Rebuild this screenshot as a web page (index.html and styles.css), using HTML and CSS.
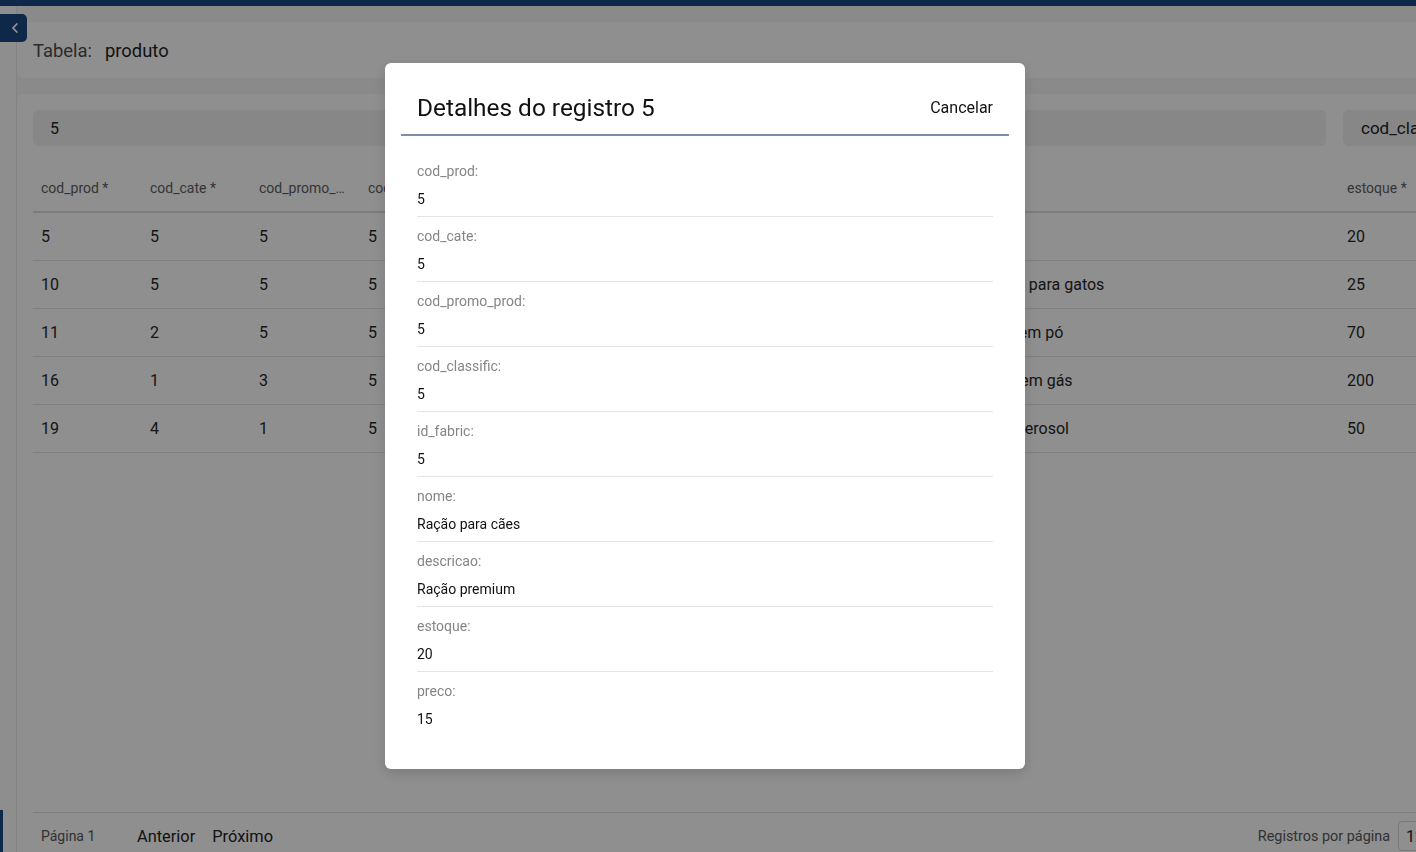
FILE: index.html
```html
<!DOCTYPE html>
<html lang="pt-BR">
<head>
<meta charset="utf-8">
<title>Tabela produto</title>
<link rel="stylesheet" href="styles.css">
</head>
<body>
<div class="topbar"></div>
<div class="layout">
  <aside class="sidebar">
    <div class="side-active"></div>
  </aside>
  <main class="main">
    <section class="card head-card">
      <span class="head-label">Tabela:</span>
      <span class="head-name">produto</span>
    </section>
    <section class="card data-card">
      <div class="filters">
        <div class="input search">5</div>
        <div class="input column">cod_classific</div>
      </div>
      <div class="table-wrap">
        <table class="grid">
          <colgroup>
            <col class="c-s"><col class="c-s"><col class="c-s"><col class="c-s"><col class="c-s">
            <col class="c-desc"><col class="c-nome"><col class="c-s"><col class="c-s">
          </colgroup>
          <thead>
            <tr>
              <th><span class="th-txt">cod_prod *</span></th>
              <th><span class="th-txt">cod_cate *</span></th>
              <th><span class="th-txt">cod_promo_prod *</span></th>
              <th><span class="th-txt">cod_classific *</span></th>
              <th><span class="th-txt">id_fabric *</span></th>
              <th><span class="th-txt">descricao</span></th>
              <th><span class="th-txt">nome</span></th>
              <th><span class="th-txt">estoque *</span></th>
              <th><span class="th-txt">preco *</span></th>
            </tr>
          </thead>
          <tbody>
            <tr><td>5</td><td>5</td><td>5</td><td>5</td><td>5</td><td>Ração premium</td><td>Cães</td><td>20</td><td>15</td></tr>
            <tr><td>10</td><td>5</td><td>5</td><td>5</td><td>3</td><td>Ração premium</td><td>Ração para gatos</td><td>25</td><td>18</td></tr>
            <tr><td>11</td><td>2</td><td>5</td><td>5</td><td>2</td><td>Leite integral</td><td>Leite em pó</td><td>70</td><td>9</td></tr>
            <tr><td>16</td><td>1</td><td>3</td><td>5</td><td>1</td><td>Bebida</td><td>Chá sem gás</td><td>200</td><td>3</td></tr>
            <tr><td>19</td><td>4</td><td>1</td><td>5</td><td>4</td><td>Limpeza</td><td>Cola aerosol</td><td>50</td><td>22</td></tr>
          </tbody>
        </table>
      </div>
      <footer class="pager">
        <span class="page-num">Página 1</span>
        <button class="pg-btn">Anterior</button>
        <button class="pg-btn">Próximo</button>
        <span class="spacer"></span>
        <span class="per-page">Registros por página</span>
        <span class="select">12</span>
      </footer>
    </section>
  </main>
</div>

<button class="back-btn" aria-label="Voltar">
  <svg width="10" height="12" viewBox="0 0 10 12"><path d="M6.8 2 L3 6 L6.8 10" fill="none" stroke="#fff" stroke-width="1.8" stroke-linecap="round" stroke-linejoin="round"/></svg>
</button>

<div class="overlay">
  <div class="modal">
    <div class="modal-head">
      <h2 class="modal-title">Detalhes do registro 5</h2>
      <button class="cancel">Cancelar</button>
    </div>
    <div class="modal-body">
      <div class="field"><div class="f-label">cod_prod:</div><div class="f-value">5</div></div>
      <div class="field"><div class="f-label">cod_cate:</div><div class="f-value">5</div></div>
      <div class="field"><div class="f-label">cod_promo_prod:</div><div class="f-value">5</div></div>
      <div class="field"><div class="f-label">cod_classific:</div><div class="f-value">5</div></div>
      <div class="field"><div class="f-label">id_fabric:</div><div class="f-value">5</div></div>
      <div class="field"><div class="f-label">nome:</div><div class="f-value">Ração para cães</div></div>
      <div class="field"><div class="f-label">descricao:</div><div class="f-value">Ração premium</div></div>
      <div class="field"><div class="f-label">estoque:</div><div class="f-value">20</div></div>
      <div class="field"><div class="f-label">preco:</div><div class="f-value">15</div></div>
    </div>
  </div>
</div>
</body>
</html>
```

FILE: styles.css
```css
* { box-sizing: border-box; }

html, body {
  margin: 0;
  height: 852px;
  overflow: hidden;
}

body {
  font-family: Roboto, "Noto Sans", "Liberation Sans", sans-serif;
  background: #eeeeee;
  color: #222;
}

.topbar {
  height: 6px;
  background: #17467c;
}

.layout {
  display: flex;
  height: 846px;
}

.sidebar {
  width: 17px;
  flex: none;
  background: #f4f4f4;
  border-right: 1px solid #e2e2e2;
  display: flex;
  flex-direction: column;
}

.side-active {
  margin-top: auto;
  width: 3px;
  height: 42px;
  background: #17467c;
}

.main {
  flex: none;
  width: 1484px;
  padding-top: 16px;
  display: flex;
  flex-direction: column;
  gap: 16px;
}

.card {
  flex: none;
  background: #f6f6f6;
  border-radius: 6px;
}

.head-card {
  height: 56px;
  display: flex;
  align-items: center;
  padding-left: 16px;
  gap: 13px;
  font-size: 18.4px;
}

.head-label { color: #4a4a4a; }
.head-name { color: #1e1e1e; }

.data-card {
  padding: 16px 16px 0;
  display: flex;
  flex-direction: column;
  height: 800px;
}

.filters {
  display: flex;
  gap: 17px;
}

.input {
  flex: none;
  height: 36px;
  border-radius: 6px;
  background: #e8e8e8;
  display: flex;
  align-items: center;
  padding-left: 17px;
  font-size: 16px;
  color: #222;
}

.search { width: 1293px; }
.column { width: 160px; padding-left: 18px; font-size: 17px; }

.table-wrap {
  flex: none;
  margin-top: 18px;
  height: 648px;
}

.grid {
  border-collapse: collapse;
  table-layout: fixed;
  width: 1452px;
}

.c-s { width: 109px; }
.c-desc { width: 394px; }
.c-nome { width: 367px; }

.grid th {
  height: 48px;
  text-align: left;
  font-weight: 400;
  font-size: 14px;
  color: #5c5c5c;
  padding: 0 8px;
  border-bottom: 2px solid #d6d6d6;
  white-space: nowrap;
  overflow: hidden;
  text-overflow: ellipsis;
}

.grid td {
  height: 48px;
  font-size: 16px;
  color: #262626;
  padding: 0 8px;
  border-bottom: 1px solid #dedede;
  white-space: nowrap;
  overflow: hidden;
}

.pager {
  flex: none;
  border-top: 1px solid #d8d8d8;
  display: flex;
  align-items: center;
  height: 47px;
  padding: 0 8px;
  white-space: nowrap;
}

.page-num {
  font-size: 14px;
  color: #555;
  width: 96px;
}

.pg-btn {
  background: none;
  border: 0;
  padding: 0;
  margin-right: 17px;
  font-family: inherit;
  font-size: 16.4px;
  color: #222;
}

.spacer { flex: 1; }

.per-page {
  font-size: 14.4px;
  color: #555;
  margin-right: 8px;
}

.select {
  flex: none;
  border: 1px solid #d0d0d0;
  border-radius: 4px;
  height: 30px;
  width: 79px;
  padding-left: 7px;
  display: flex;
  align-items: center;
  font-size: 16px;
  color: #222;
}

.back-btn {
  position: absolute;
  left: 0;
  top: 14px;
  width: 27px;
  height: 28px;
  border: 0;
  padding: 0 0 0 2px;
  background: #17467c;
  border-radius: 0 5px 5px 0;
  display: flex;
  align-items: center;
  justify-content: center;
}

.overlay {
  position: fixed;
  inset: 0;
  background: rgba(0, 0, 0, 0.42);
  display: flex;
  justify-content: center;
  align-items: flex-start;
  padding: 63px 6px 0 0;
}

.modal {
  width: 640px;
  height: 706px;
  background: #ffffff;
  border-radius: 6px;
  padding: 0 16px;
  box-shadow: 0 4px 14px rgba(0, 0, 0, 0.15);
}

.modal-head {
  display: flex;
  align-items: center;
  justify-content: space-between;
  height: 73px;
  padding: 18px 16px 0;
  border-bottom: 2px solid #7c8fa8;
}

.modal-title {
  margin: 0;
  font-weight: 400;
  font-size: 24.4px;
  color: #111;
}

.cancel {
  background: none;
  border: 0;
  padding: 0;
  font-family: inherit;
  font-size: 16px;
  color: #111;
}

.modal-body {
  padding: 16px 16px 0;
}

.field {
  padding: 10px 0 8px;
  border-bottom: 1px solid #e4e4e4;
}

.field:last-child { border-bottom: 0; }

.f-label {
  font-size: 14px;
  line-height: 18px;
  color: #858585;
}

.f-value {
  margin-top: 10px;
  font-size: 14px;
  line-height: 18px;
  color: #111;
}
```
